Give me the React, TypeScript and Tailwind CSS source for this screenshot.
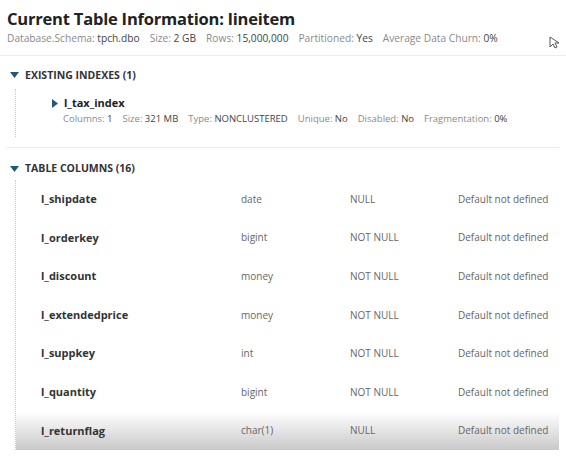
const cols = [
  ["l_shipdate", "date", "NULL"],
  ["l_orderkey", "bigint", "NOT NULL"],
  ["l_discount", "money", "NOT NULL"],
  ["l_extendedprice", "money", "NOT NULL"],
  ["l_suppkey", "int", "NOT NULL"],
  ["l_quantity", "bigint", "NOT NULL"],
  ["l_returnflag", "char(1)", "NULL"],
];

const Down = () => (
  <svg width="9" height="7" viewBox="0 0 9 7" className="mr-[6px]">
    <path d="M0 0h9L4.5 6z" fill="#1f5a7a" />
  </svg>
);

function Meta({ k, v }: { k: string; v: string }) {
  return (
    <span className="mr-[10px]">
      <span className="text-[#8a8a8a]">{k}: </span>
      <span className="text-[#444]">{v}</span>
    </span>
  );
}

export default function App() {
  return (
    <div className="w-[566px] h-[458px] overflow-hidden bg-white text-[#333] relative" style={{ fontFamily: '"Open Sans", sans-serif' }}>
      <div className="px-[7px] pt-[6px] pb-[10px] border-b border-[#ececec]">
        <div className="text-[16.5px] font-bold leading-[25px] tracking-[-0.2px] text-[#222]">Current Table Information: lineitem</div>
        <div className="text-[10.2px] leading-[14px]">
          <Meta k="Database.Schema" v="tpch.dbo" />
          <Meta k="Size" v="2 GB" />
          <Meta k="Rows" v="15,000,000" />
          <Meta k="Partitioned" v="Yes" />
          <Meta k="Average Data Churn" v="0%" />
        </div>
      </div>
      <svg className="absolute left-[549px] top-[36px]" width="10" height="14" viewBox="0 0 10 14">
        <path d="M1 1v10l3-3 2 4 2-1-2-4h4z" fill="white" stroke="#555" strokeWidth="1" />
      </svg>

      <div className="mx-[7px] border-b border-[#ececec] pb-[10px]">
        <div className="flex items-center pt-[12px] pl-[3px] text-[10.5px] font-bold text-[#333]"><Down />EXISTING INDEXES (1)</div>
        <div className="ml-[8px] border-l border-dotted border-[#ccc] mt-[5px] pl-[36px] pt-[6px] pb-[10px]">
          <div className="flex items-center text-[11px] font-bold text-[#222]">
            <svg width="6" height="9" viewBox="0 0 6 9" className="mr-[6px]"><path d="M0 0l6 4.5L0 9z" fill="#1f5a7a" /></svg>
            l_tax_index
          </div>
          <div className="ml-[11px] text-[9.5px] leading-[16px]">
            <Meta k="Columns" v="1" />
            <Meta k="Size" v="321 MB" />
            <Meta k="Type" v="NONCLUSTERED" />
            <Meta k="Unique" v="No" />
            <Meta k="Disabled" v="No" />
            <Meta k="Fragmentation" v="0%" />
          </div>
        </div>
      </div>

      <div className="mx-[7px]">
        <div className="flex items-center pt-[13px] pl-[3px] text-[10.5px] font-bold text-[#333]"><Down />TABLE COLUMNS (16)</div>
        <div className="ml-[8px] border-l border-dotted border-[#ccc] mt-[3px]">
          {cols.map(([n, t, nl], i) => (
            <div key={n} className={`flex items-center h-[38.6px] text-[10px] ${i === cols.length - 1 ? "bg-gradient-to-b from-white to-[#c9c9c9]" : ""}`}>
              <div className="w-[225px] pl-[25px] text-[11px] font-bold text-[#333]">{n}</div>
              <div className="w-[109px] text-[#666]">{t}</div>
              <div className="w-[108px] text-[#666]">{nl}</div>
              <div className="text-[#666]">Default not defined</div>
            </div>
          ))}
        </div>
      </div>
    </div>
  );
}
